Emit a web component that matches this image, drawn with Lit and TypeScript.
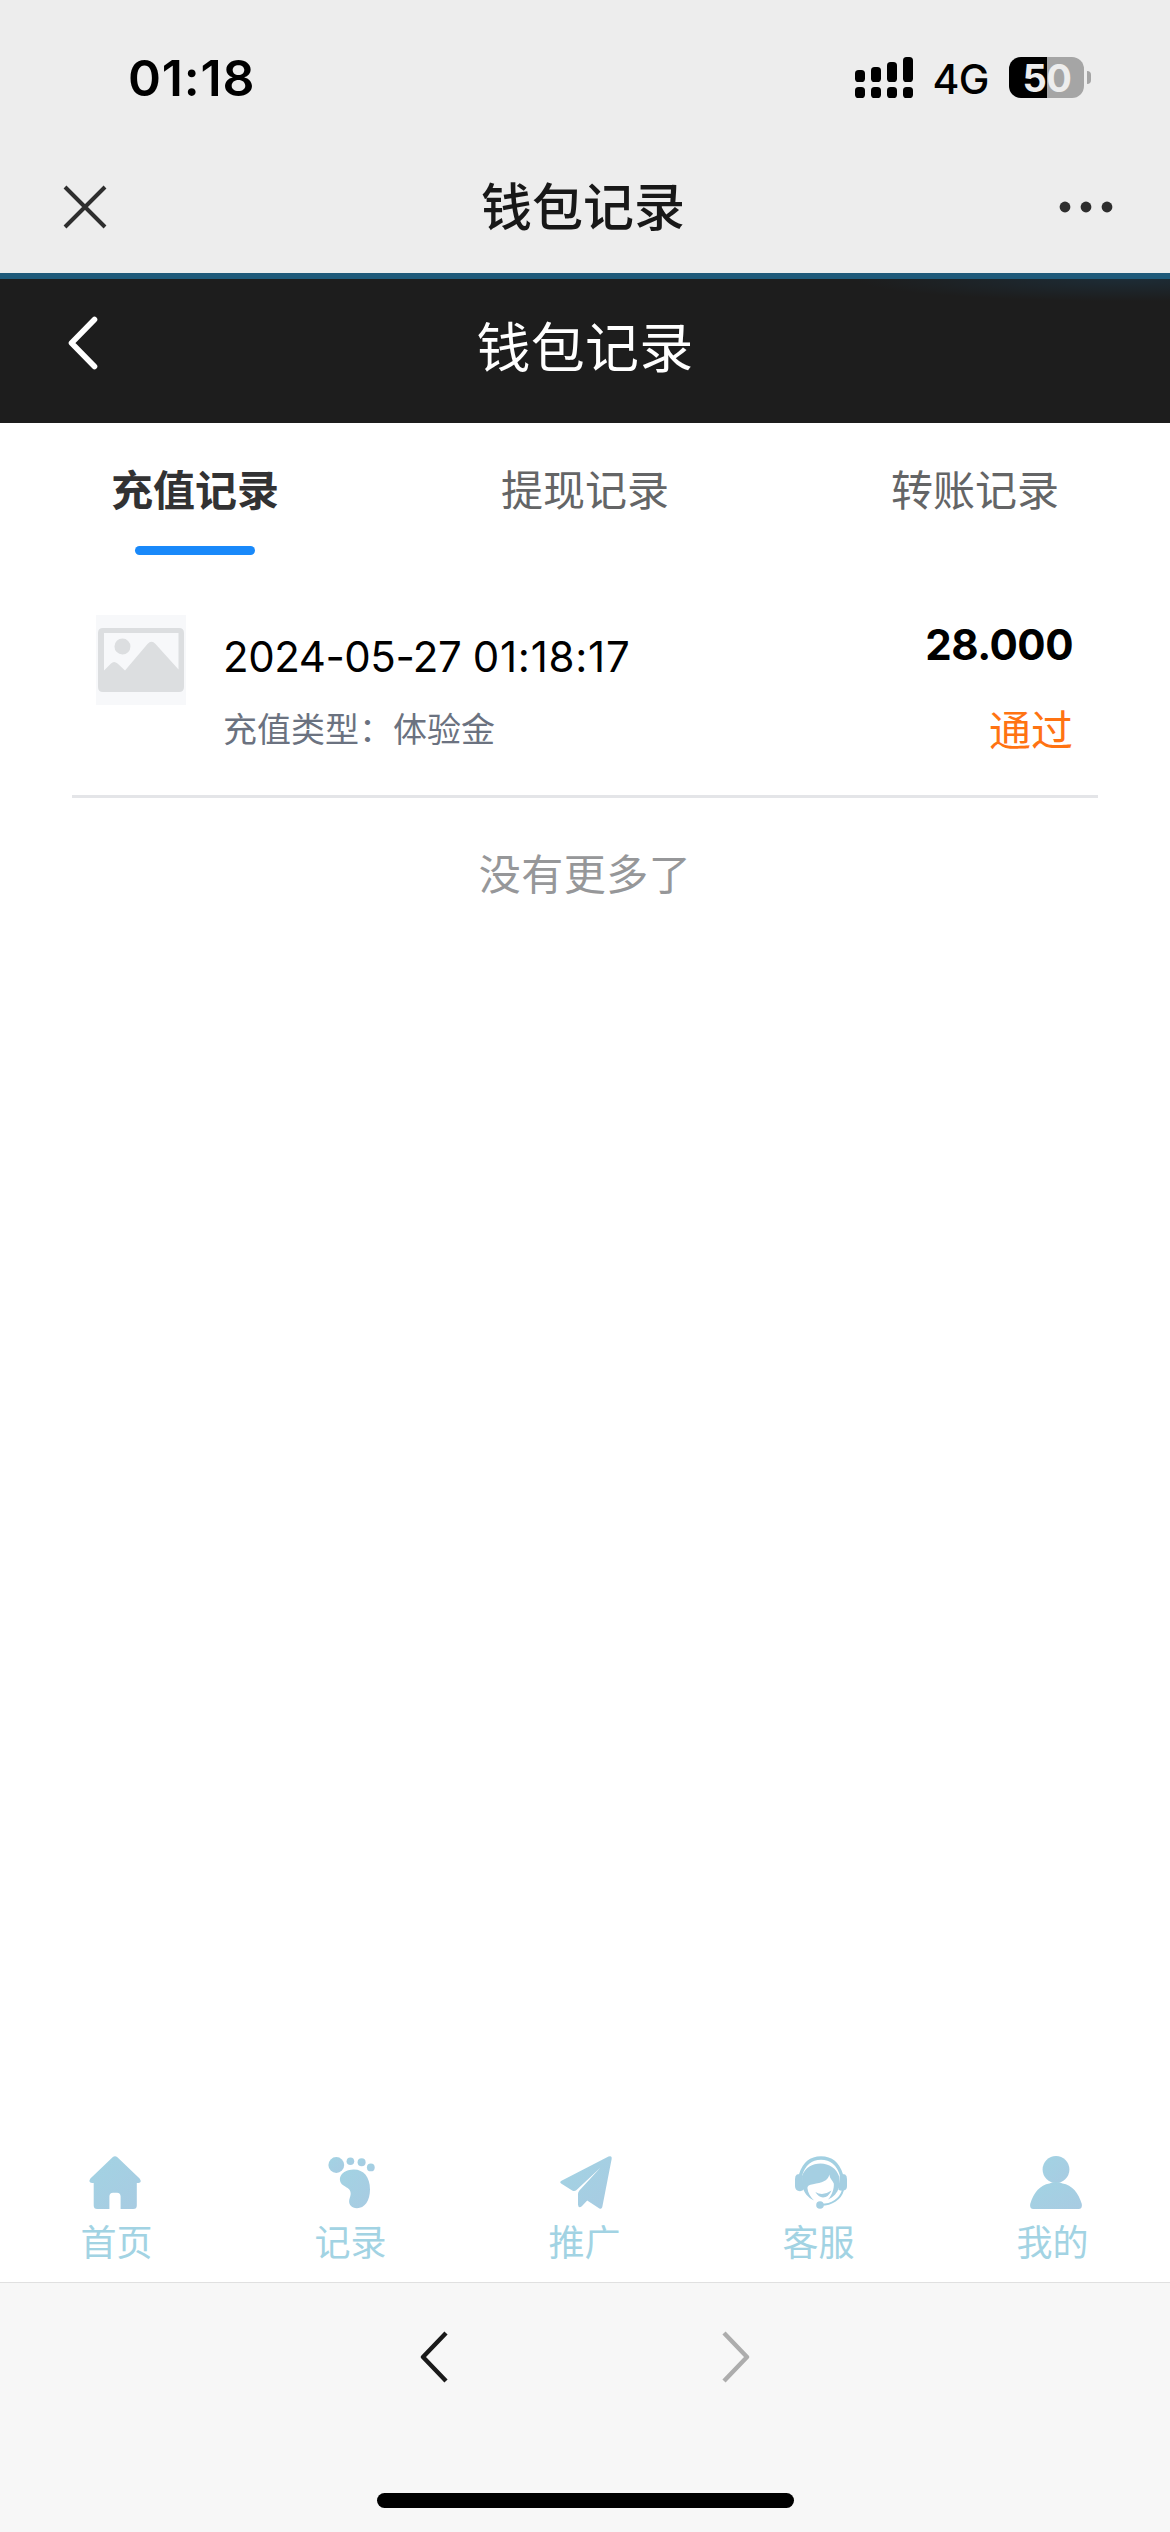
import { LitElement, html, css, svg } from "lit";
import { customElement, property } from "lit/decorators.js";

const gradient = (id: string) => svg`
  <defs>
    <linearGradient id=${id} x1="0" y1="0" x2="1" y2="1">
      <stop offset="0" stop-color="#a2d3e3"></stop>
      <stop offset="1" stop-color="#a8cbe2"></stop>
    </linearGradient>
  </defs>`;

const icons: Record<string, unknown> = {
  home: svg`<path fill="url(#g-home)" d="M23.6 1.2Q26 -.8 28.4 1.2L50.6 22.5Q53.4 26.2 49.5 27H47.8V49.5Q47.8 53 44.3 53H31.6V40.5Q31.6 36.7 28 36.7H24Q20.4 36.7 20.4 40.5V53H8.2Q4.7 53 4.7 49.5V27H3Q-1.2 26.2 1.4 22.5Z"></path>`,
  foot: svg`<g fill="url(#g-foot)"><circle cx="8.3" cy="9" r="7.9"></circle><circle cx="22.4" cy="5.3" r="3.8"></circle><circle cx="33.6" cy="6.3" r="4"></circle><circle cx="42.8" cy="11.4" r="3.9"></circle><path d="M25.5 13.5C35.5 13.3 42 21 42 33.5C42 45 36.5 52.2 29 52.2C23.5 52.2 20.5 48.5 21.2 44C21.8 41.5 23.3 38.5 22.5 36C21.3 32 18.5 31.8 15.2 29.3C8 23.3 13.5 13.7 25.5 13.5Z"></path></g>`,
  plane: svg`<path fill="url(#g-plane)" d="M48.5.5Q52.3-.8 51.6 3.2L42.3 51Q41.6 53.8 39 52.3L27.2 44.5L21.8 50.2Q18.6 53 18 48.8V38Q18 36 19.4 34.4L40.6 11.6L17.6 33Q15 36.3 12.2 34.4L1.5 27.7Q-1 26 1.5 24.7Z"></path>`,
  service: svg`<g fill="none" stroke="#a2d0e2"><path stroke-width="3.3" d="M5.5 19C9 7.5 16.5 2 26 2S43 7.5 46.5 19"></path><path stroke-width="2" d="M48 34C45.5 43 37 48.8 26 48.8"></path></g><g fill="#a5cfe2"><path d="M1.8 18.5Q3 17.7 7 18L9 33Q8 35 5 35.2Q0 34.8 0 30V23Q0 19.8 1.8 18.5Z"></path><path d="M50.2 18.5Q49 17.7 45 18L43.4 33.4Q44.5 34.6 47.5 34.8Q52 34.4 52 30V23Q52 19.8 50.2 18.5Z"></path><path d="M7 20C10 11.5 17.5 7.5 25.5 7.5C34 7.5 41.5 12.5 44.2 20.5V31C42.3 37 38.5 41.2 33 43.6C37.5 38.5 39.2 32 38.8 27.5C37.8 24.5 34.8 23 34.4 18.5C32.5 25.7 27 26.4 18 28.2Q12.2 29 12.4 32C12.8 37 15.5 41 19 44.4C12.8 41.5 8.8 36.8 7.4 30Z"></path><path d="M20.3 36Q27.8 40.6 36.5 34.5Q33.5 41.3 28 41.5Q23.5 41 20.3 36Z"></path><circle cx="25" cy="49" r="3.8"></circle></g>`,
  user: svg`<g fill="url(#g-user)"><circle cx="26" cy="13.5" r="13.4"></circle><path d="M19.5 27.4Q26 24.8 32.5 27.4C42 29 48.5 36.5 51.8 48Q52.6 53 48.5 53H3.5Q-.6 53 .2 48C3.5 36.5 10 29 19.5 27.4Z"></path></g>`,
};

const base = css`
  :host {
    display: block;
    box-sizing: border-box;
    font-family: Inter, "Noto Sans CJK SC", sans-serif;
  }
  svg {
    display: block;
  }
`;

@customElement("status-bar")
class StatusBar extends LitElement {
  static styles = [
    base,
    css`
      .bar {
        display: flex;
        align-items: center;
        height: 155px;
        padding: 0 79px 0 128px;
        color: #000;
      }
      .time {
        flex: 1;
        font-size: 50px;
        font-weight: 600;
        line-height: 60px;
        letter-spacing: 0.8px;
      }
      .signal {
        margin-right: 19px;
      }
      .net {
        font-size: 41px;
        font-weight: 500;
        line-height: 50px;
        letter-spacing: -0.5px;
        margin-right: 20px;
        padding-top: 2px;
      }
      .battery {
        display: flex;
        align-items: center;
        justify-content: center;
        box-sizing: border-box;
        width: 75px;
        height: 41px;
        border-radius: 12px;
        background: linear-gradient(90deg, #000 38px, #a5a5a5 38px);
        color: #ededed;
        font-size: 38px;
        font-weight: 700;
        letter-spacing: -0.5px;
        padding-left: 1px;
      }
      .nub {
        width: 4px;
        height: 13px;
        margin-left: 3px;
        border-radius: 0 6px 6px 0;
        background: #a5a5a5;
      }
    `,
  ];
  render() {
    const tops = [13, 10, 5, 0];
    return html`<div class="bar">
      <span class="time">01:18</span>
      <svg class="signal" width="58" height="41" viewBox="0 0 58 41">
        ${tops.map(
          (t, i) => svg`<rect x=${i * 16} y=${t} width="10" height=${25 - t} rx="3.6"></rect>
            <rect x=${i * 16} y="30" width="10" height="11" rx="3.6"></rect>`
        )}
      </svg>
      <span class="net">4G</span>
      <span class="battery">50</span><span class="nub"></span>
    </div>`;
  }
}

@customElement("browser-bar")
class BrowserBar extends LitElement {
  static styles = [
    base,
    css`
      .bar {
        display: flex;
        align-items: center;
        justify-content: space-between;
        height: 118px;
        box-sizing: border-box;
        padding: 0 57px 14px 63px;
      }
      .title {
        font-size: 51px;
        font-weight: 500;
        line-height: 74px;
        padding-top: 2px;
        color: #181818;
      }
    `,
  ];
  render() {
    return html`<div class="bar">
      <svg width="44" height="44" viewBox="0 0 44 44"><path d="M2 2L42 42M42 2L2 42" stroke="#2e2e2e" stroke-width="4"></path></svg>
      <span class="title">钱包记录</span>
      <svg width="54" height="12" viewBox="0 0 54 12" fill="#2e2e2e"><circle cx="6" cy="6" r="5.4"></circle><circle cx="27" cy="6" r="5.4"></circle><circle cx="48" cy="6" r="5.4"></circle></svg>
    </div>`;
  }
}

@customElement("page-header")
class PageHeader extends LitElement {
  static styles = [
    base,
    css`
      .bar {
        display: grid;
        grid-template-columns: 1fr auto 1fr;
        align-items: center;
        box-sizing: border-box;
        height: 150px;
        border-top: 6px solid #1f5a7a;
        padding: 0 67px;
        background: radial-gradient(ellipse 270px 22px at 1125px 0, #1d2c36, rgba(29, 29, 29, 0)) no-repeat, #1d1d1d;
      }
      .back {
        margin-bottom: 16px;
      }
      .title {
        font-size: 54px;
        line-height: 78px;
        letter-spacing: 0.3px;
        color: #fff;
        margin-top: -5px;
      }
    `,
  ];
  render() {
    return html`<div class="bar">
      <svg class="back" width="32" height="54" viewBox="0 0 32 54"><path d="M27.5 3.5L4.5 27L27.5 50.5" fill="none" stroke="#fff" stroke-width="5.6" stroke-linecap="round" stroke-linejoin="round"></path></svg>
      <span class="title">钱包记录</span>
    </div>`;
  }
}

@customElement("record-tabs")
class RecordTabs extends LitElement {
  static styles = [
    base,
    css`
      .tabs {
        display: grid;
        grid-template-columns: repeat(3, 1fr);
        height: 132px;
      }
      .tab {
        display: flex;
        flex-direction: column;
        align-items: center;
        justify-content: space-between;
        font-size: 42px;
        line-height: 135px;
        color: #646566;
      }
      .label {
        height: 123px;
      }
      .active {
        color: #323233;
        font-weight: 600;
      }
      .line {
        width: 120px;
        height: 9px;
        border-radius: 5px;
        background: #1989fa;
      }
    `,
  ];
  render() {
    return html`<div class="tabs">
      ${["充值记录", "提现记录", "转账记录"].map(
        (t, i) => html`<div class="tab ${i === 0 ? "active" : ""}">
          <span class="label">${t}</span>${i === 0 ? html`<span class="line"></span>` : ""}
        </div>`
      )}
    </div>`;
  }
}

@customElement("record-item")
class RecordItem extends LitElement {
  @property() day = "";
  @property() clock = "";
  @property() kind = "";
  @property() amount = "";
  @property() status = "";
  static styles = [
    base,
    css`
      .item {
        display: flex;
        box-sizing: border-box;
        height: 243px;
        margin: 0 72px;
        padding: 60px 26px 0 24px;
        border-bottom: 3px solid #e4e5e8;
      }
      .main {
        flex: 1;
        display: flex;
        flex-direction: column;
        margin-left: 37px;
        padding-top: 12px;
      }
      .time {
        font-size: 42px;
        line-height: 60px;
        color: #000;
      }
      .day {
        letter-spacing: -0.45px;
      }
      .clock {
        letter-spacing: 0.75px;
      }
      .kind {
        font-size: 34px;
        line-height: 50px;
        margin-top: 18px;
        color: #6b7280;
      }
      .side {
        display: flex;
        flex-direction: column;
        align-items: flex-end;
      }
      .amount {
        font-size: 42px;
        font-weight: 700;
        line-height: 60px;
        letter-spacing: -0.5px;
        margin-right: -1px;
        color: #000;
      }
      .status {
        font-size: 42px;
        line-height: 60px;
        margin-top: 26px;
        margin-right: -1px;
        color: #ff7312;
      }
    `,
  ];
  render() {
    return html`<div class="item">
      <svg width="90" height="90" viewBox="0 0 90 90">
        <rect width="90" height="90" fill="#f7f8fa"></rect>
        <path fill="#dcdee0" fill-rule="evenodd" d="M7 13H83Q88 13 88 18V72Q88 77 83 77H7Q2 77 2 72V18Q2 13 7 13ZM8 18V55.5L15 48.5Q18 45.5 21.5 48.5L29 55.5L51.5 29Q55.5 24.5 59.5 29L82.5 54.5V18ZM26.5 23.5A8 8 0 1 1 26.4 39.5A8 8 0 0 1 26.5 23.5Z"></path>
      </svg>
      <div class="main">
        <span class="time"><span class="day">${this.day} </span><span class="clock">${this.clock}</span></span>
        <span class="kind">${this.kind}</span>
      </div>
      <div class="side">
        <span class="amount">${this.amount}</span>
        <span class="status">${this.status}</span>
      </div>
    </div>`;
  }
}

@customElement("tab-bar")
class TabBar extends LitElement {
  static styles = [
    base,
    css`
      .bar {
        display: grid;
        grid-template-columns: repeat(5, 1fr);
        height: 126px;
      }
      .cell {
        display: flex;
        flex-direction: column;
        align-items: center;
        font-size: 36px;
        line-height: 50px;
        color: #a2d3e3;
      }
      .label {
        margin-left: -1px;
      }
      .icon {
        overflow: visible;
        margin-bottom: 9px;
      }
      .home {
        margin-left: -4px;
      }
      .service {
        margin-left: 4px;
      }
      .user {
        margin-left: 6px;
      }
      .plane {
        margin-left: 2px;
      }
    `,
  ];
  render() {
    const items = [
      ["home", "首页"],
      ["foot", "记录"],
      ["plane", "推广"],
      ["service", "客服"],
      ["user", "我的"],
    ];
    return html`<div class="bar">
      ${items.map(
        ([id, label]) => html`<div class="cell">
          <svg class="icon ${id}" width=${id === "foot" ? 47 : 52} height="53" viewBox="0 0 ${id === "foot" ? 47 : 52} 53">
            ${gradient("g-" + id)}${icons[id]}
          </svg>
          <span class="label">${label}</span>
        </div>`
      )}
    </div>`;
  }
}

@customElement("browser-footer")
class BrowserFooter extends LitElement {
  static styles = [
    base,
    css`
      .foot {
        display: flex;
        flex-direction: column;
        align-items: center;
        justify-content: space-between;
        box-sizing: border-box;
        height: 250px;
        padding: 48px 0 24px;
        border-top: 1px solid #e0e0e0;
        background: #f7f7f7;
      }
      .nav {
        display: flex;
        gap: 274px;
      }
      .pill {
        width: 417px;
        height: 15px;
        border-radius: 8px;
        background: #000;
      }
    `,
  ];
  render() {
    return html`<div class="foot">
      <div class="nav">
        <svg width="28" height="52" viewBox="0 0 28 52"><path d="M26 2L3 26L26 50" fill="none" stroke="#1a1a1a" stroke-width="4.4" stroke-linejoin="round"></path></svg>
        <svg width="28" height="52" viewBox="0 0 28 52"><path d="M2 2L25 26L2 50" fill="none" stroke="#adadad" stroke-width="4.4" stroke-linejoin="round"></path></svg>
      </div>
      <div class="pill"></div>
    </div>`;
  }
}

@customElement("app-root")
class AppRoot extends LitElement {
  static styles = [
    base,
    css`
      .page {
        display: flex;
        flex-direction: column;
        width: 1170px;
        height: 2532px;
        background: #fff;
      }
      .top {
        background: #ededed;
      }
      .list {
        flex: 1;
      }
      .end {
        text-align: center;
        font-size: 42px;
        line-height: 153px;
        letter-spacing: 0.5px;
        color: #969799;
      }
    `,
  ];
  render() {
    return html`<div class="page">
      <div class="top"><status-bar></status-bar><browser-bar></browser-bar></div>
      <page-header></page-header>
      <record-tabs></record-tabs>
      <div class="list">
        <record-item day="2024-05-27" clock="01:18:17" kind="充值类型：体验金" amount="28.000" status="通过"></record-item>
        <div class="end">没有更多了</div>
      </div>
      <tab-bar></tab-bar>
      <browser-footer></browser-footer>
    </div>`;
  }
}
